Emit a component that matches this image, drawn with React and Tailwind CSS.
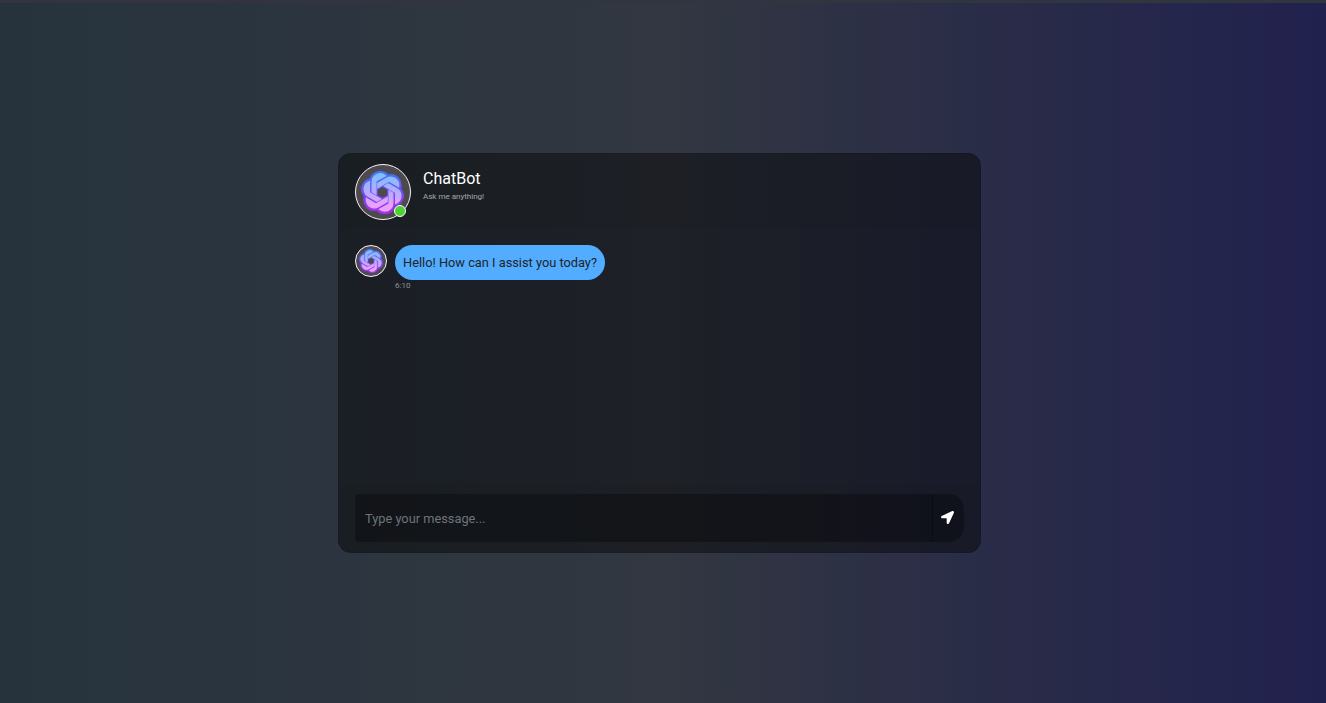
import { useId } from "react";
import { FaLocationArrow } from "react-icons/fa";

const OUTLINE =
  "M22.2819 9.8211a5.9847 5.9847 0 0 0-.5157-4.9108 6.0462 6.0462 0 0 0-6.5098-2.9A6.0651 6.0651 0 0 0 4.9807 4.1818a5.9847 5.9847 0 0 0-3.9977 2.9 6.0462 6.0462 0 0 0 .7427 7.0966 5.98 5.98 0 0 0 .511 4.9107 6.051 6.051 0 0 0 6.5146 2.9001A5.9847 5.9847 0 0 0 13.2599 24a6.0557 6.0557 0 0 0 5.7718-4.2058 5.9894 5.9894 0 0 0 3.9977-2.9001 6.0557 6.0557 0 0 0-.7475-7.0729z";
const CENTER = "M9.4041 10.4976l2.602-1.4998 2.6069 1.4998v2.9994l-2.5974 1.4997-2.6067-1.4997Z";
const PETALS = [
  "M13.2599 22.4292a4.4755 4.4755 0 0 1-2.8764-1.0408l.1419-.0804 4.7783-2.7582a.7948.7948 0 0 0 .3927-.6813v-6.7369l2.02 1.1686a.071.071 0 0 1 .038.052v5.5826a4.504 4.504 0 0 1-4.4945 4.4944z",
  "M3.5992 18.3038a4.4708 4.4708 0 0 1-.5346-3.0137l.142.0852 4.783 2.7582a.7712.7712 0 0 0 .7806 0l5.8428-3.3685v2.3324a.0804.0804 0 0 1-.0332.0615L9.74 19.9502a4.4992 4.4992 0 0 1-6.1408-1.6464z",
  "M2.3408 7.8956a4.485 4.485 0 0 1 2.3655-1.9728V11.6a.7664.7664 0 0 0 .3879.6765l5.8144 3.3543-2.0201 1.1685a.0757.0757 0 0 1-.071 0l-4.8303-2.7865A4.504 4.504 0 0 1 2.3408 7.872z",
  "M18.9371 11.7514L13.1038 8.364 15.1192 7.2a.0757.0757 0 0 1 .071 0l4.8303 2.7913a4.4944 4.4944 0 0 1-.6765 8.1042v-5.6772a.79.79 0 0 0-.407-.667z",
  "M20.9478 8.7283l-.142-.0852-4.7735-2.7818a.7759.7759 0 0 0-.7854 0L9.409 9.2297V6.8974a.0662.0662 0 0 1 .0284-.0615l4.8303-2.7866a4.4992 4.4992 0 0 1 6.6802 4.66z",
  "M8.3065 12.863l-2.02-1.1638a.0804.0804 0 0 1-.038-.0567V6.0742a4.4992 4.4992 0 0 1 7.3757-3.4537l-.142.0805L8.704 5.459a.7948.7948 0 0 0-.3927.6813z",
];

function Knot({ className }) {
  const id = useId();
  const light = `${id}light`;
  const deep = `${id}deep`;
  return (
    <svg viewBox="0 0 24 24" className={className} aria-hidden="true">
      <defs>
        <linearGradient id={light} gradientUnits="userSpaceOnUse" x1="12" y1="1" x2="12" y2="23">
          <stop offset="0" stopColor="#79c0ff" />
          <stop offset="0.5" stopColor="#b8acfc" />
          <stop offset="0.85" stopColor="#eba2ff" />
        </linearGradient>
        <linearGradient id={deep} gradientUnits="userSpaceOnUse" x1="12" y1="0" x2="12" y2="24">
          <stop offset="0" stopColor="#3d7cf4" />
          <stop offset="0.5" stopColor="#6f50f0" />
          <stop offset="1" stopColor="#b02cec" />
        </linearGradient>
      </defs>
      <path d={OUTLINE} fill={`url(#${deep})`} />
      {PETALS.map((d) => (
        <path key={d} d={d} fill={`url(#${light})`} stroke={`url(#${light})`} strokeWidth="0.75" />
      ))}
      <path d={CENTER} fill="#4d494c" />
    </svg>
  );
}

export default function App() {
  return (
    <div
      className="h-[703px] w-full overflow-hidden border-t-[3px] border-[#32353f] bg-[linear-gradient(to_right,#26333d,#323741,#21214e)] bg-origin-border"
      style={{ fontFamily: "Roboto, sans-serif" }}
    >
      <main className="mt-[150px] ml-[338px] flex h-[400px] w-[643px] flex-col overflow-hidden rounded-[13px] border border-black/[0.125] bg-black/40">
        <header className="flex h-[75px] shrink-0 bg-black/[0.03] pt-[10px] pl-4">
          <div className="relative size-14">
            <div className="flex size-14 items-center justify-center rounded-full border border-[#f5f6fa] bg-[#4d494c] pr-px">
              <Knot className="size-[43px] drop-shadow-[0_0_1px_#6f50f080]" />
            </div>
            <span className="absolute top-[41px] left-[39px] size-[12px] rounded-full border border-white bg-[#4cd137]" />
          </div>
          <div className="ml-3 pt-1">
            <h1 className="text-[16px] leading-[22px] text-white">ChatBot</h1>
            <p className="pt-px text-[8px] leading-[12px] text-white/60">Ask me anything!</p>
          </div>
        </header>

        <section className="flex flex-1 items-start pt-4 pl-4">
          <div className="flex size-8 items-center justify-center rounded-full border border-[#f5f6fa] bg-[#4d494c]">
            <Knot className="size-[24px] drop-shadow-[0_0_1px_#6f50f080]" />
          </div>
          <div className="ml-2">
            <p className="h-[35px] rounded-[25px] bg-[#52acff] px-2 text-[12.8px] leading-[35px] text-[#212529]">
              Hello! How can I assist you today?
            </p>
            <time className="block text-[8px] leading-[12px] text-white/50">6:10</time>
          </div>
        </section>

        <footer className="h-[67px] shrink-0 bg-black/[0.03] px-4 pt-[9px]">
          <form className="flex h-[48px]" onSubmit={(e) => e.preventDefault()}>
            <input
              type="text"
              placeholder="Type your message..."
              className="min-w-0 flex-1 rounded-l-[4px] bg-black/30 px-[10px] pt-px text-[12.8px] text-white outline-none placeholder:text-[#6c757d]"
            />
            <button
              type="submit"
              aria-label="Send"
              className="flex w-8 items-center justify-center rounded-r-[15px] border-l border-black/30 bg-black/30 pr-[2px] pb-[2px] text-white"
            >
              <FaLocationArrow className="size-[13px]" />
            </button>
          </form>
        </footer>
      </main>
    </div>
  );
}
